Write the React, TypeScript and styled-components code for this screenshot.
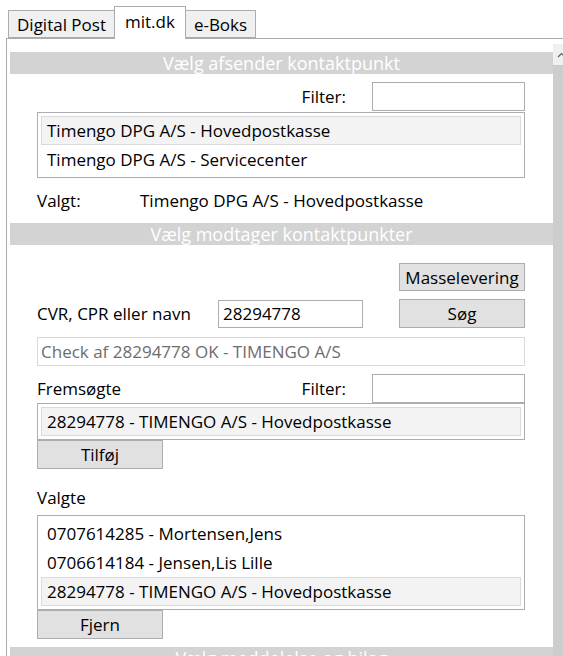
import styled, { createGlobalStyle } from "styled-components";

const GlobalStyle = createGlobalStyle`
  html, body {
    margin: 0;
    padding: 0;
    background: #ffffff;
  }
  body {
    font-family: "Open Sans", "Noto Sans", sans-serif;
    font-size: 17px;
    color: #000000;
  }
`;

const Window = styled.div`
  width: 563px;
  height: 656px;
  overflow: hidden;
  background: #ffffff;
`;

const TabStrip = styled.div`
  display: flex;
  align-items: flex-end;
  padding: 6px 0 0 8px;
  height: 32px;
`;

const Tab = styled.div<{ active?: boolean }>`
  position: relative;
  box-sizing: border-box;
  height: ${(p) => (p.active ? "33px" : "28px")};
  margin-bottom: ${(p) => (p.active ? "-1px" : "0")};
  margin-right: -1px;
  padding: ${(p) => (p.active ? "0 10px 4px" : "0 8px")};
  display: flex;
  align-items: center;
  border: 1px solid #acacac;
  border-bottom: ${(p) => (p.active ? "none" : "1px solid #acacac")};
  background: ${(p) => (p.active ? "#ffffff" : "#f0f0f0")};
  z-index: ${(p) => (p.active ? 2 : 1)};
  font-size: 17px;
`;

const Panel = styled.div`
  margin-left: 6px;
  width: 580px;
  height: 640px;
  border: 1px solid #acacac;
  box-sizing: border-box;
  padding-top: 5px;
  display: flex;
`;

const Content = styled.div`
  width: 546px;
  padding: 8px 0 0 3px;
  box-sizing: border-box;
`;

const ScrollBar = styled.div`
  width: 17px;
  display: flex;
  flex-direction: column;
`;

const ScrollArrow = styled.div`
  height: 21px;
  background: #f0f0f0;
  display: flex;
  align-items: center;
  justify-content: center;
`;

const ScrollThumb = styled.div`
  flex: 1;
  background: #cdcdcd;
`;

const SectionHeader = styled.div`
  height: 22px;
  line-height: 22px;
  background: #d3d3d3;
  color: #ffffff;
  text-align: center;
  font-size: 18px;
  white-space: nowrap;
  overflow: hidden;
`;

const Body = styled.div<{ top?: number }>`
  padding: ${(p) => p.top ?? 0}px 28px 0 27px;
`;

const FilterRow = styled.div`
  display: flex;
  align-items: center;
  justify-content: space-between;
  height: 29px;
`;

const FilterGroup = styled.div`
  display: flex;
  align-items: center;
  gap: 26px;
  margin-left: auto;
`;

const TextBox = styled.div<{ width: number; height?: number }>`
  box-sizing: border-box;
  width: ${(p) => p.width}px;
  height: ${(p) => p.height ?? 29}px;
  border: 1px solid #abadb3;
  background: #ffffff;
  padding-left: 4px;
  display: flex;
  align-items: center;
`;

const ListBox = styled.div<{ gap?: number }>`
  box-sizing: border-box;
  margin-top: ${(p) => p.gap ?? 1}px;
  border: 1px solid #abadb3;
  padding: 3px;
`;

const ListItem = styled.div<{ selected?: boolean }>`
  box-sizing: border-box;
  height: 29px;
  padding-left: 5px;
  display: flex;
  align-items: center;
  border: 1px solid ${(p) => (p.selected ? "#dadada" : "transparent")};
  background: ${(p) => (p.selected ? "#f3f3f3" : "transparent")};
  white-space: nowrap;
`;

const ValgtRow = styled.div`
  display: flex;
  align-items: center;
  height: 45px;
`;

const ValgtLabel = styled.div`
  width: 103px;
`;

const ButtonRow = styled.div`
  display: flex;
  justify-content: flex-end;
`;

const Button = styled.div<{ height?: number }>`
  box-sizing: border-box;
  width: 126px;
  height: ${(p) => p.height ?? 29}px;
  border: 1px solid #adadad;
  background: #e1e1e1;
  display: flex;
  align-items: center;
  justify-content: center;
`;

const SearchRow = styled.div`
  display: grid;
  grid-template-columns: 181px 145px 1fr 126px;
  align-items: center;
  margin-top: 8px;
`;

const StatusBox = styled.div`
  box-sizing: border-box;
  margin-top: 9px;
  height: 29px;
  border: 1px solid #d9d9d9;
  padding-left: 3px;
  display: flex;
  align-items: center;
  color: #6d6d6d;
`;

const FieldLabel = styled.div`
  padding-top: 18px;
  line-height: 22px;
  height: 28px;
`;

export default function App() {
  return (
    <Window>
      <GlobalStyle />
      <TabStrip>
        <Tab>Digital Post</Tab>
        <Tab active>mit.dk</Tab>
        <Tab>e-Boks</Tab>
      </TabStrip>
      <Panel>
        <Content>
          <SectionHeader>Vælg afsender kontaktpunkt</SectionHeader>
          <Body top={8}>
            <FilterRow>
              <FilterGroup>
                <span>Filter:</span>
                <TextBox width={153} />
              </FilterGroup>
            </FilterRow>
            <ListBox>
              <ListItem selected>Timengo DPG A/S - Hovedpostkasse</ListItem>
              <ListItem>Timengo DPG A/S - Servicecenter</ListItem>
            </ListBox>
            <ValgtRow>
              <ValgtLabel>Valgt:</ValgtLabel>
              <span>Timengo DPG A/S - Hovedpostkasse</span>
            </ValgtRow>
          </Body>
          <SectionHeader>Vælg modtager kontaktpunkter</SectionHeader>
          <Body top={18}>
            <ButtonRow>
              <Button height={28}>Masselevering</Button>
            </ButtonRow>
            <SearchRow>
              <span>CVR, CPR eller navn</span>
              <TextBox width={145} height={28}>
                28294778
              </TextBox>
              <span />
              <Button>Søg</Button>
            </SearchRow>
            <StatusBox>Check af 28294778 OK - TIMENGO A/S</StatusBox>
            <FilterRow style={{ marginTop: 8 }}>
              <span>Fremsøgte</span>
              <FilterGroup>
                <span>Filter:</span>
                <TextBox width={153} />
              </FilterGroup>
            </FilterRow>
            <ListBox gap={0}>
              <ListItem selected>28294778 - TIMENGO A/S - Hovedpostkasse</ListItem>
            </ListBox>
            <Button>Tilføj</Button>
            <FieldLabel>Valgte</FieldLabel>
            <ListBox gap={0}>
              <ListItem>0707614285 - Mortensen,Jens</ListItem>
              <ListItem>0706614184 - Jensen,Lis Lille</ListItem>
              <ListItem selected>28294778 - TIMENGO A/S - Hovedpostkasse</ListItem>
            </ListBox>
            <Button>Fjern</Button>
          </Body>
          <SectionHeader style={{ marginTop: 8 }}>Vælg meddelelse og bilag</SectionHeader>
        </Content>
        <ScrollBar>
          <ScrollArrow>
            <svg width="9" height="6" viewBox="0 0 9 6">
              <path d="M1 5 L4.5 1.5 L8 5" fill="none" stroke="#606060" strokeWidth="1.2" />
            </svg>
          </ScrollArrow>
          <ScrollThumb />
        </ScrollBar>
      </Panel>
    </Window>
  );
}
